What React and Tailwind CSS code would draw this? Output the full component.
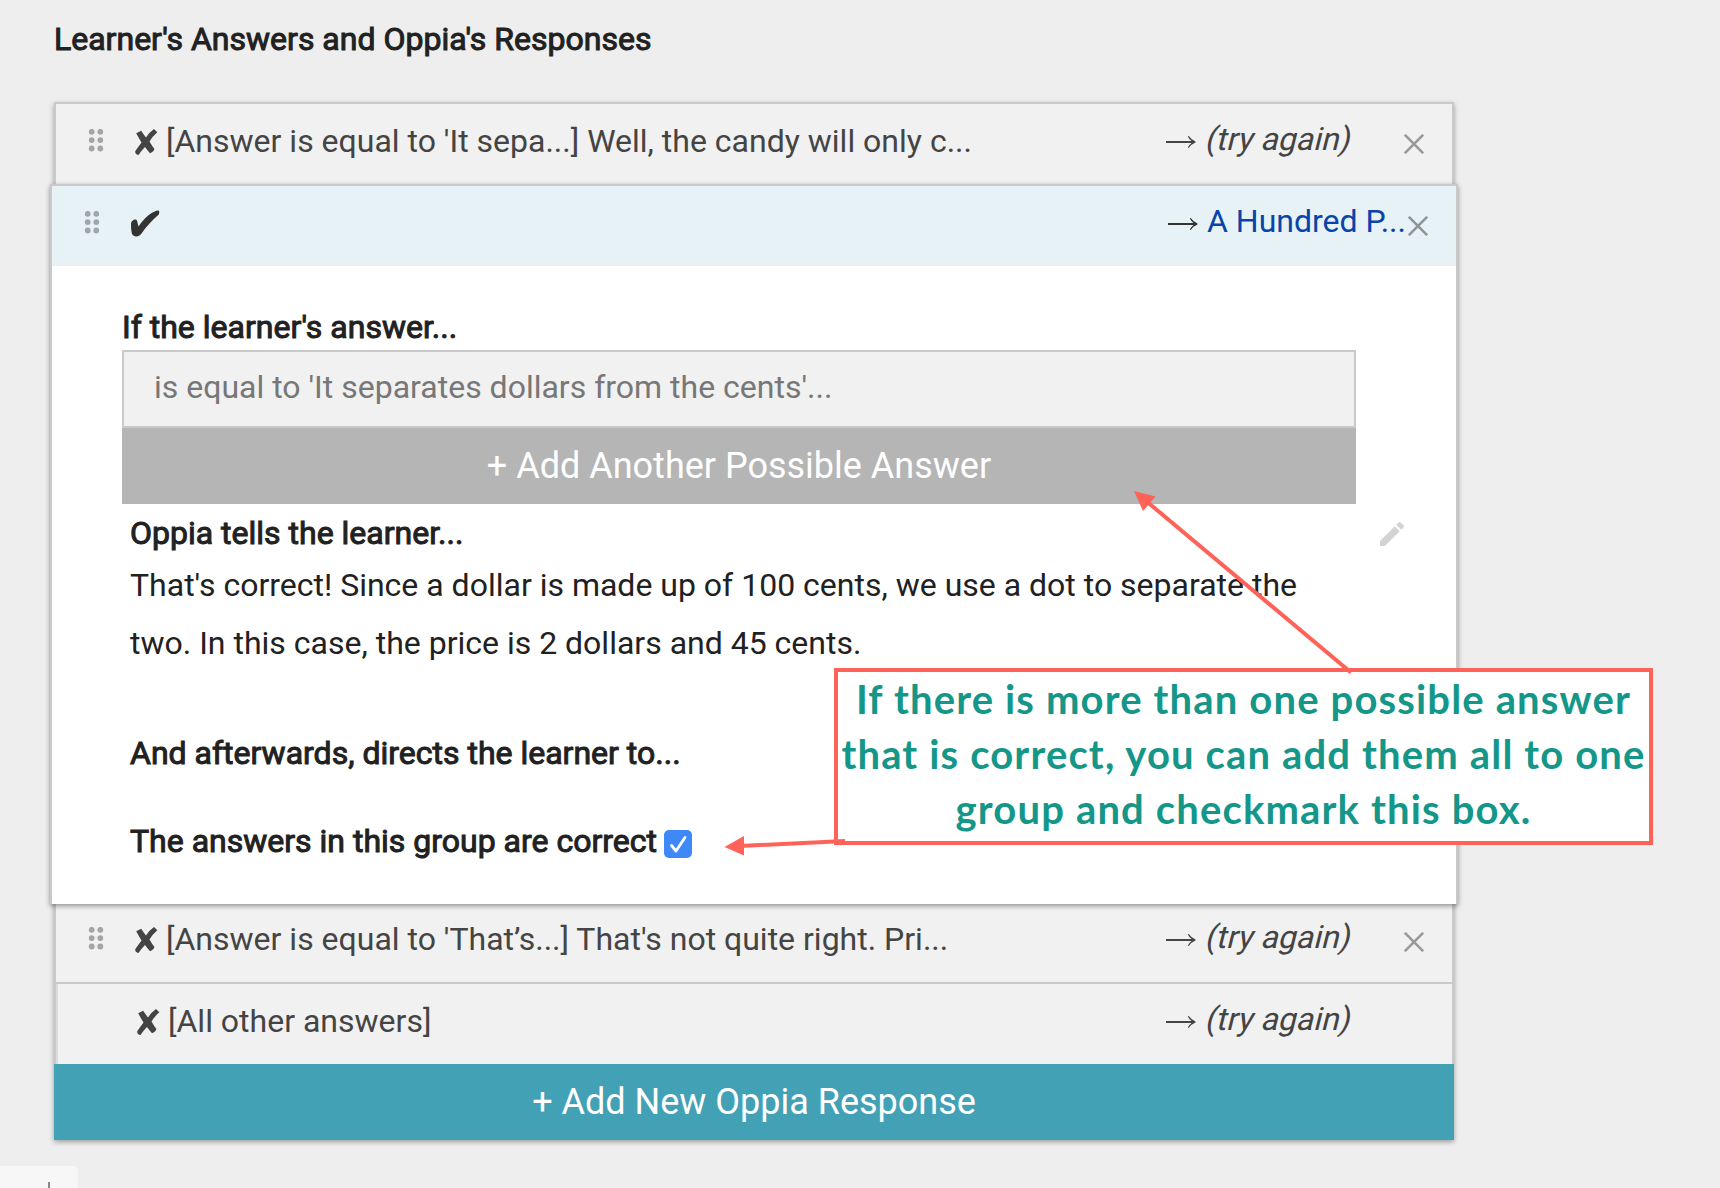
const T = ({ className = "", children }) => (
  <span className={"whitespace-pre " + className}>{children}</span>
);

function Dots() {
  return (
    <svg className="block h-[23px] w-4" viewBox="0 0 16 23" fill="currentColor">
      {[2.8, 11.1, 19.500].map((y) => [3.7, 12.3].map((x) => <circle key={x + "-" + y} cx={x} cy={y} r="2.9" />))}
    </svg>
  );
}

function Close() {
  return (
    <svg className="block size-5" viewBox="0 0 20 20" fill="none" stroke="currentColor" strokeWidth="2.6">
      <path d="M0.8 0.8 19.2 19.2M19.2 0.8 0.8 19.2" />
    </svg>
  );
}

function Arrow() {
  return (
    <svg className="block h-4 w-[30px]" viewBox="0 0 30 16" fill="currentColor">
      <path d="M0 7.100H25.500Q23 5 21.800 2.600L22.800 2Q25.500 6 29.500 7.500V8.500Q25.500 10 22.800 14L21.800 13.400Q23 11 25.500 8.900H0Z" />
    </svg>
  );
}

function Cross() {
  return (
    <svg className="block h-[26px] w-6" viewBox="0 0 24 26" fill="currentColor">
      <path d="M2.200 4.300 7.200 1.800Q9.500 5.500 12 8.500 15.500 3 20 0L23.300 3.300Q18.500 7.500 15.500 12.500 18 17 20.300 19.700 20.500 22 16 24.300 13.500 21.500 11 18 7.500 21.500 4.500 26 1 25.500 1.200 22.300 4.500 17.500 7.500 13.500 5 9.500 2.200 4.300Z" />
    </svg>
  );
}

function Check() {
  return (
    <svg className="block h-[27px] w-[30px]" viewBox="0 0 30 27" fill="currentColor">
      <path d="M1 14C1 9.500 6.500 8.200 7 10.500L8.500 16.500C13 10 20 2.500 26.500 0.800C28.500 0.200 29.300 0.500 29.300 2.200L28.800 4.500C22 10 16 17 11.500 23.500C9 27 4 27.500 2 24C1.200 21 1 17 1 14Z" />
    </svg>
  );
}

function Pencil() {
  return (
    <svg className="block size-6" viewBox="3 3 18 18" fill="currentColor">
      <path d="M3 17.250V21h3.750L17.810 9.940l-3.750-3.750L3 17.250zM20.710 7.040a1 1 0 0 0 0-1.410l-2.340-2.340a1 1 0 0 0-1.410 0l-1.830 1.830 3.750 3.750 1.830-1.830z" />
    </svg>
  );
}

const Oblique = ({ children }) => <span className="inline-block -skew-x-[14deg] whitespace-pre">{children}</span>;

export default function App() {
  return (
    <div className="relative h-[1188px] w-[1720px] overflow-hidden bg-[#eeeeee] font-['Roboto',sans-serif] text-[32px] leading-[40px] text-[#212121]">
      <h2 className="h-[102px] pt-[19px] pl-[54px] [-webkit-text-stroke:1px_#212121]"><T>Learner's Answers and Oppia's Responses</T></h2>

      <main className="ml-[54px] w-[1400px] shadow-[0_2px_5px_rgba(0,0,0,0.35)]">
        <section className="flex h-[82px] items-start border-2 border-b-0 border-[#c9c9c9] bg-[#f1f1f1] pl-8 text-[#444]">
          <div className="mt-[25px] w-[46px] text-[#a5a5a5]"><Dots /></div>
          <div className="mt-[25px] w-[32px]"><Cross /></div>
          <div className="mt-[17px] w-[1000px]"><T>[Answer is equal to 'It sepa...] Well, the candy will only c...</T></div>
          <div className="mt-[30px] w-[41px]"><Arrow /></div>
          <div className="mt-[15px] w-[197px]"><Oblique>(try again)</Oblique></div>
          <div className="mt-[30px] text-[#999]"><Close /></div>
        </section>

        <section className="relative z-10 -mx-1 h-[720px] border-2 border-b-0 border-[#c9c9c9] bg-white shadow-[0_2px_5px_rgba(0,0,0,0.4)]">
          <header className="flex h-[80px] items-start border-b-2 border-[#eeeeee] bg-[#e7f2f7] pl-8">
            <div className="mt-[25px] w-[46px] text-[#9fa6a8]"><Dots /></div>
            <div className="mt-[24px] w-[1038px] text-[#333]"><Check /></div>
            <div className="mt-[30px] w-[39px] text-[#333]"><Arrow /></div>
            <div className="mt-[15px] w-[201px] text-[#0844aa]"><T>A Hundred P...</T></div>
            <div className="mt-[30px] text-[#8e9598]"><Close /></div>
          </header>
          <div className="pl-[70px]">
            <h3 className="h-[84px] pt-[41px] [-webkit-text-stroke:1px_#212121]"><T>If the learner's answer...</T></h3>
            <div className="h-[78px] w-[1234px] border-2 border-[#c9c9c9] bg-[#f1f1f1] pt-[15px] pl-[30px] text-[#777]"><T>is equal to 'It separates dollars from the cents'...</T></div>
            <div className="h-[76px] w-[1234px] bg-[#b5b5b5] pt-[18px] text-center text-[36px] text-white"><T>+ Add Another Possible Answer</T></div>
            <div className="flex h-[52px] items-start pl-2">
              <h3 className="w-[1250px] pt-[9px] [-webkit-text-stroke:1px_#212121]"><T>Oppia tells the learner...</T></h3>
              <div className="mt-[18px] text-[#d3d3d3]"><Pencil /></div>
            </div>
            <p className="h-[177px] pl-2 leading-[58px]"><T>That's correct! Since a dollar is made up of 100 cents, we use a dot to separate the</T><br /><T>two. In this case, the price is 2 dollars and 45 cents.</T></p>
            <h3 className="h-[88px] pl-2 [-webkit-text-stroke:1px_#212121]"><T>And afterwards, directs the learner to...</T></h3>
            <div className="flex items-start gap-[7px] pl-2">
              <span className="[-webkit-text-stroke:1px_#212121]"><T>The answers in this group are correct</T></span>
              <div className="mt-[9px] flex size-7 items-center justify-center rounded-[5px] bg-[#3f88f7]">
                <svg className="size-5" viewBox="0 0 20 20" fill="none" stroke="white" strokeWidth="2.800" strokeLinecap="round" strokeLinejoin="round"><path d="M3.500 11.500 8 17 17 3.500" /></svg>
              </div>
            </div>
          </div>
        </section>

        <section className="flex h-[78px] items-start border-x-2 border-[#c9c9c9] bg-[#f1f1f1] pl-8 text-[#444]">
          <div className="mt-[23px] w-[46px] text-[#a5a5a5]"><Dots /></div>
          <div className="mt-[23px] w-[32px]"><Cross /></div>
          <div className="mt-[15px] w-[1000px]"><T>[Answer is equal to 'That’s...] That's not quite right. Pri...</T></div>
          <div className="mt-[28px] w-[41px]"><Arrow /></div>
          <div className="mt-[13px] w-[197px]"><Oblique>(try again)</Oblique></div>
          <div className="mt-[28px] text-[#999]"><Close /></div>
        </section>
        <section className="h-[82px] border-2 border-b-0 border-[#c9c9c9] bg-[#f1f1f1] text-[#444]">
          <div className="flex h-full items-start border-l-2 border-[#dcdcdc] pl-[78px]">
            <div className="mt-[25px] w-[32px]"><Cross /></div>
            <div className="mt-[17px] w-[998px]"><T>[All other answers]</T></div>
            <div className="mt-[30px] w-[41px]"><Arrow /></div>
            <div className="mt-[15px]"><Oblique>(try again)</Oblique></div>
          </div>
        </section>
        <div className="h-[76px] bg-[#43a1b6] pt-[18px] text-center text-[36px] text-white"><T>+ Add New Oppia Response</T></div>
      </main>

      <div className="mt-[26px] flex h-[22px] w-[78px] rounded-tr-[5px] bg-[#f7f7f7] pt-4 pl-12"><span className="w-[2px] bg-[#888]" /></div>

      <aside className="absolute top-[668px] left-[834px] z-20 h-[177px] w-[819px] border-[4px] border-[#ff6258] bg-white text-center font-['Lato',sans-serif] text-[40px] leading-[55px] font-bold tracking-[1.15px] text-[#149688]">
        <T>If there is more than one possible answer</T><br /><T>that is correct, you can add them all to one</T><br /><T>group and checkmark this box.</T>
      </aside>
      <svg className="pointer-events-none absolute inset-0 z-30 h-[1188px] w-[1720px]" fill="#ff6258" stroke="none">
        <path d="M1351 672.500 1145 500M845 841 740 846" stroke="#ff6258" strokeWidth="4" />
        <path d="M1134 491 1155.500 496.500 1143 511ZM724.500 847 744 836 744 855.500Z" />
      </svg>
    </div>
  );
}
